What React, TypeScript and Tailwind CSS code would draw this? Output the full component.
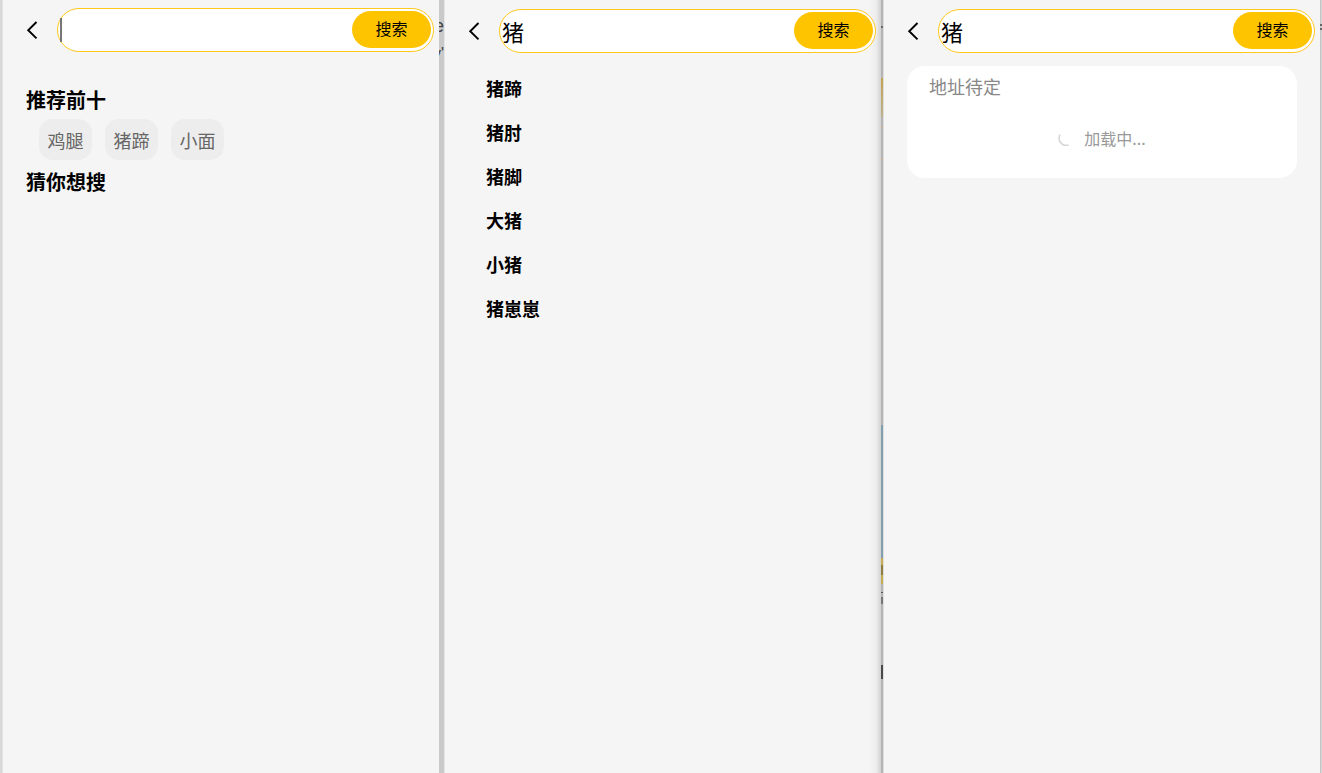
import { useState } from "react";
import type { ReactNode } from "react";

function SearchBar({ initial = "", caret = false }: { initial?: string; caret?: boolean }) {
  const [value, setValue] = useState(initial);
  return (
    <form className="flex items-center pr-[5px]" onSubmit={(e) => e.preventDefault()}>
      <button type="button" aria-label="返回" className="flex h-11 w-[54px] shrink-0 items-center pl-[22px]">
        <svg width="16" height="20" viewBox="0 0 16 20" fill="none" stroke="#000" strokeWidth="1.9" aria-hidden="true">
          <path d="M11.5 2 3.2 10.2l8.3 8.2" />
        </svg>
      </button>
      <div className="relative flex h-11 min-w-0 flex-1 items-start rounded-full border border-[#ffc91c] bg-white p-[2px]">
        {caret && <span className="absolute top-[9px] left-[2px] h-6 w-[2px] bg-[#777]" />}
        <input
          type="text"
          aria-label="搜索"
          value={value}
          onChange={(e) => setValue(e.target.value)}
          className="h-[38px] min-w-0 flex-1 bg-transparent text-[22px] text-black outline-none"
        />
        <button type="submit" className="h-[37px] w-[79px] shrink-0 rounded-full bg-[#ffc400] pb-1 text-base text-black">
          搜索
        </button>
      </div>
    </form>
  );
}

function Panel({ children, className = "" }: { children: ReactNode; className?: string }) {
  return <section className={`min-w-0 flex-1 bg-[#f5f5f5] ${className}`}>{children}</section>;
}

const popular = ["鸡腿", "猪蹄", "小面"];
const suggestions = ["猪蹄", "猪肘", "猪脚", "大猪", "小猪", "猪崽崽"];

export default function App() {
  return (
    <main className="flex min-h-screen overflow-hidden bg-[#f5f5f5] font-['Noto_Sans_CJK_SC','Noto_Sans',sans-serif] text-black">
      <div className="w-[3px] shrink-0 bg-linear-to-r from-[#d8d8d8] from-60% to-[#ececec]" />

      <Panel className="pt-2">
        <SearchBar caret />
        <div className="pt-[33px] pl-[23px]">
          <h2 className="text-xl leading-[30px] font-bold">推荐前十</h2>
          <ul className="flex gap-[13px] pt-1 pl-[13px]">
            {popular.map((item) => (
              <li key={item}>
                <button type="button" className="h-[41px] w-[53px] rounded-[14px] bg-[#ededed] text-lg text-[#666]">
                  {item}
                </button>
              </li>
            ))}
          </ul>
          <h2 className="pt-[7px] text-xl leading-[30px] font-bold">猜你想搜</h2>
        </div>
      </Panel>

      <div className="w-1.5 shrink-0 overflow-hidden border-r border-[#e6e6e6] bg-[#c9c9c9] pt-[14px] font-['Liberation_Sans',sans-serif] text-lg leading-6 text-[#444]" aria-hidden="true">
        <div className="flex w-full justify-end">e</div>
        <div className="flex w-full justify-end pt-1 text-base">y'</div>
      </div>

      <Panel className="bg-linear-to-l from-[#d2d2d2] via-[#ededed] via-[5px] to-[#f5f5f5] to-[12px] pt-[9px]">
        <SearchBar initial="猪" />
        <ul className="pt-[13px] pl-[41px]">
          {suggestions.map((item) => (
            <li key={item} className="flex h-11 items-center text-lg font-bold">{item}</li>
          ))}
        </ul>
      </Panel>

      <div className="flex w-[3px] shrink-0 flex-col border-r border-[#dedede] bg-[#b4b4b4]" aria-hidden="true">
        <div className="mt-[26px] h-[2px] bg-[#666]" />
        <div className="mt-[50px] h-[39px] bg-linear-to-b from-[#c2a24a] to-[#bdb28e]" />
        <div className="mt-[10px] h-px bg-[#c1ad7a]" />
        <div className="mt-[31px] h-px bg-[#c1ad7a]" />
        <div className="mt-[265px] h-[133px] bg-[#829fae]" />
        <div className="h-[7px] bg-[#c4ad52]" />
        <div className="h-[10px] bg-[#8f7f3e]" />
        <div className="h-[9px] bg-[#c4ad52]" />
        <div className="mt-2 h-px bg-[#555]" />
        <div className="mt-1 h-[7px] bg-[#777]" />
        <div className="mt-[61px] h-[14px] bg-[#484848]" />
      </div>

      <Panel className="pt-[9px]">
        <SearchBar initial="猪" />
        <div className="mt-[13px] mr-[23px] ml-[23px] h-28 rounded-[18px] bg-white pt-2">
          <p className="pl-[22px] text-lg leading-6 text-[#888]">地址待定</p>
          <div role="status" className="flex items-center justify-center gap-[10px] pt-7 text-base leading-6 text-[#999]">
            <svg width="16" height="16" viewBox="0 0 16 16" fill="none" stroke="#d4d4d4" strokeWidth="1.5" aria-hidden="true">
              <path d="M2 4.5C-1 10.5 4 17 10.5 15" />
            </svg>
            加载中...
          </div>
        </div>
      </Panel>

      <div className="w-[2px] shrink-0 bg-linear-to-r from-[#bcbcbc] to-[#dedede]" aria-hidden="true">
        <div className="mt-6 h-[2px] bg-[#666]" />
        <div className="mt-[2px] h-[2px] bg-[#666]" />
      </div>
    </main>
  );
}
